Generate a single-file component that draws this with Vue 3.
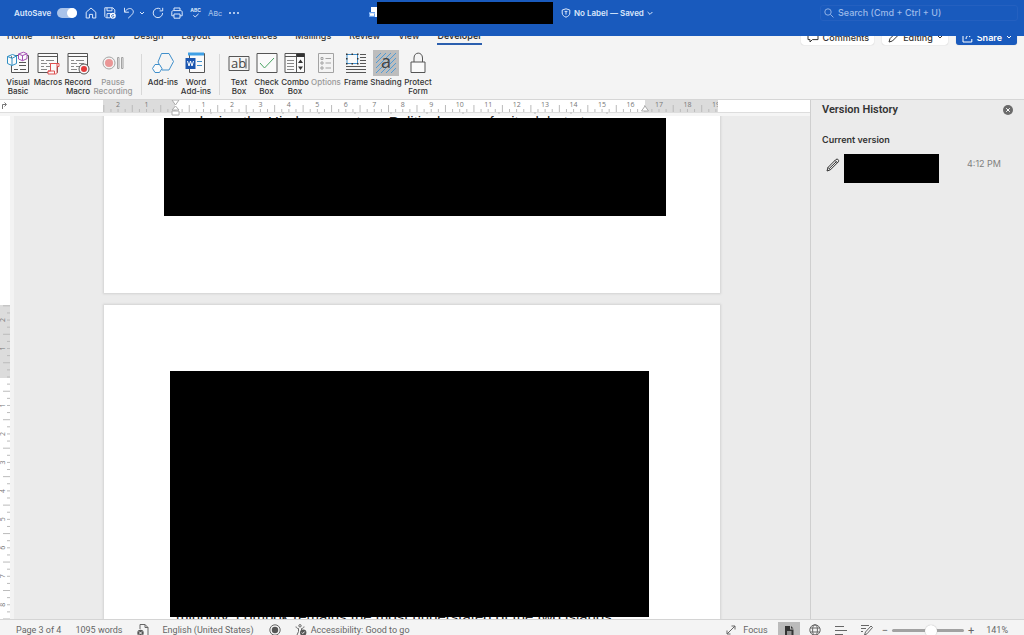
<script setup>
import { ref } from 'vue'

const autosave = ref(true)
const query = ref('')
const zoom = ref(55)

const tabs = ['Home', 'Insert', 'Draw', 'Design', 'Layout', 'References', 'Mailings', 'Review', 'View', 'Developer']

const groups = [
  {
    name: 'code',
    items: [
      { icon: 'vb', label: 'Visual\nBasic' },
      { icon: 'macros', label: 'Macros' },
      { icon: 'record', label: 'Record\nMacro' },
      { icon: 'pause', label: 'Pause\nRecording', off: true },
    ],
  },
  {
    name: 'addins',
    items: [
      { icon: 'addins', label: 'Add-ins' },
      { icon: 'word', label: 'Word\nAdd-ins' },
    ],
  },
  {
    name: 'controls',
    items: [
      { icon: 'text', label: 'Text\nBox' },
      { icon: 'check', label: 'Check\nBox' },
      { icon: 'combo', label: 'Combo\nBox' },
      { icon: 'options', label: 'Options', off: true },
      { icon: 'frame', label: 'Frame' },
      { icon: 'shading', label: 'Shading', on: true },
      { icon: 'lock', label: 'Protect\nForm' },
    ],
  },
]

const UNIT = 28.47
function marks(zero, from, to) {
  const list = []
  for (let q = from; q <= to; q++) {
    list.push({ at: zero + (q * UNIT) / 4, long: Math.abs(q % 4) === 2, n: q % 4 === 0 && q !== 0 ? Math.abs(q / 4) : '' })
  }
  return list
}
const hMarks = marks(72, -10, 76)
const vMarks = marks(261, -10, 34)
const textMarks = Array.from({ length: 12 }, (_, i) => 108 + i * 36)
</script>

<template>
  <div class="app">
    <header class="titlebar">
      <div class="quick">
        <label class="autosave">AutoSave<input v-model="autosave" type="checkbox" role="switch" /></label>
        <button aria-label="Home"><svg width="12" height="12" viewBox="0 0 12 12"><path d="M1.2 5.2 6 1l4.8 4.2V11H7.6V7.4H4.4V11H1.2z" /></svg></button>
        <button aria-label="Save"><svg width="12" height="12" viewBox="0 0 12 12"><path d="M6 10.8H2.2L.8 9.4V.8h8l2 2V6M3 .8v3h5v-3M3 10.8V6.6h4" /><circle cx="8.8" cy="8.8" r="3" class="solid" /><path class="blue" d="M7.5 8.8a1.4 1.4 0 0 1 2.5-.6M10.1 9a1.4 1.4 0 0 1-2.5.6" /></svg></button>
        <button aria-label="Undo"><svg width="12" height="12" viewBox="0 0 12 12"><path d="M1.5.8v4.4h4.4M1.600 5C4 1.600 7.200.6 9.200 2.400c2.300 2.300.6 4.600-1 6L5.200 11.200" /></svg></button>
        <button aria-label="Undo options" class="tiny"><svg width="6" height="12" viewBox="0 0 6 12"><path d="m1 5 2 2 2-2" /></svg></button>
        <button aria-label="Redo"><svg width="12" height="12" viewBox="0 0 12 12"><path d="M10.600 6A4.700 4.700 0 1 1 8.600 2.100M10.700.8v3.100H7.600" /></svg></button>
        <button aria-label="Print"><svg width="12" height="12" viewBox="0 0 12 12"><path d="M3 3.600V1h6v2.600M3 8.800H.8V5.200c0-1 .6-1.600 1.600-1.600h7.200c1 0 1.600.6 1.600 1.600v3.600H9M3 7h6v4.200H3z" /></svg></button>
        <button aria-label="Spelling" class="spell"><span>ABC</span><svg width="8" height="5" viewBox="0 0 8 5"><path d="m1.400 2.200 1.800 1.800L6.600.8" /></svg></button>
        <button class="abc" aria-label="Case">Aʙᴄ</button>
        <button aria-label="More" class="more"><i></i><i></i><i></i></button>
      </div>
      <div class="doctitle">
        <svg width="8" height="11" viewBox="0 0 8 11"><path class="page" d="M2 0h6v10H2z" /><path class="badge" d="M0 5h6v5H0z" /><path class="w" d="m1 6 1 3 1-3 1 3 1-3" /></svg>
        <div class="redacted title"></div>
        <button class="saved">
          <svg width="10" height="10" viewBox="0 0 10 10"><path d="M5 .8 8.800 2v3c0 2-1.600 3.400-3.800 4.200C2.800 8.400 1.200 7 1.200 5V2zM3.600 3.400h2.800M5 3.400v3.200" /></svg>
          No Label — Saved
          <svg width="6" height="6" viewBox="0 0 6 6"><path d="m.6 2 2.400 2.400L5.400 2" /></svg>
        </button>
      </div>
      <label class="search">
        <svg width="10" height="10" viewBox="0 0 10 10"><circle cx="4" cy="4" r="3.200" /><path d="m6.400 6.400 3 3" /></svg>
        <input v-model="query" type="search" placeholder="Search (Cmd + Ctrl + U)" aria-label="Search" />
      </label>
    </header>

    <nav class="tabs">
      <button v-for="t in tabs" :key="t" class="tab" :class="{ active: t === 'Developer' }">{{ t }}</button>
      <div class="actions">
        <button class="pill"><svg width="12" height="11" viewBox="0 0 12 11"><path d="M1 .6h10v7H5.400L3 10V7.600H1z" /></svg>Comments</button>
        <button class="pill"><svg width="11" height="11" viewBox="0 0 11 11"><path d="M1 10 2 6.600 7.600 1l2.400 2.400L4.400 9z" /></svg>Editing<svg width="6" height="6" viewBox="0 0 6 6"><path d="m1 2 2 2 2-2" /></svg></button>
        <button class="pill share"><svg width="11" height="11" viewBox="0 0 11 11"><path d="M4 1.600H1V10h8.800V7M4 7c0-3 2-4 5-4M7 1l2.400 2L7 5" /></svg>Share<svg width="6" height="6" viewBox="0 0 6 6"><path d="m1 2 2 2 2-2" /></svg></button>
      </div>
    </nav>

    <section class="ribbon">
      <div v-for="g in groups" :key="g.name" class="group" :class="g.name">
        <button v-for="i in g.items" :key="i.label" class="cmd" :class="{ off: i.off, on: i.on }">
          <svg width="26" height="26" viewBox="0 0 26 26">
            <g v-if="i.icon === 'vb'">
              <path class="k fill" d="M6.500 5.500h17v17h-17z" /><path class="k" d="M14 12.500h7M14 15.500h7M9 19.500h4M15 19.500h6" />
              <path class="purple fill" d="m13.500 4 5-1.800L22 3.700v5l-4.500 2-4-1.700zM13.500 4l4 1.600L22 3.700M17.500 5.600v5" />
              <path class="cyan fill" d="m2.500 6.500 5-2 4 1.500v7.500l-4.500 2-4.500-2zM2.500 6.500l4.500 1.800 4.500-2.300M7 8.300v7" />
            </g>
            <g v-if="i.icon === 'macros' || i.icon === 'record'">
              <path class="k fill" d="M3 3.500h19.500v19H3z" /><path class="k" d="M3 6.500h19.500" /><path class="thin" d="M6 10.500h3M11 10.500h8M6 13.500h6M14 13.500h5M6 16.500h3M11 16.500h5M6 19.500h6" />
              <path v-if="i.icon === 'macros'" class="red fill" d="M15.500 13.500H24v3h-2v6c0 1-.6 1.500-1.500 1.500H13v-3h2.500zM22 13.500v3M13 21h6.500v3" />
              <g v-else><circle cx="19" cy="19" r="5" class="k fill" /><circle cx="19" cy="19" r="3" class="redsolid" /></g>
            </g>
            <g v-if="i.icon === 'pause'">
              <circle cx="9" cy="13" r="6" class="k" /><circle cx="9" cy="13" r="4" class="redsolid" /><path class="k" d="M17.500 7.500h1.500v11h-1.500zM21.500 7.500H23v11h-1.500z" />
            </g>
            <g v-if="i.icon === 'addins'">
              <path class="sky" d="M11.500 3.500h7.500l4.500 8-4.500 8.500h-7L8 12z" /><path class="sky fill" d="M5 14.500h4.500l2.500 4-2.500 4H5l-2.500-4z" />
            </g>
            <g v-if="i.icon === 'word'">
              <path class="k fill" d="M6.500 3.500h15v19h-15z" /><path class="skysolid" d="M5 2.500h16v3H5z" /><path class="sky" d="M14 11.500h5M14 15.500h5" />
              <path class="navy" d="M2.500 8h10v11h-10z" /><path class="white" d="m4.500 11 1.500 5 1.500-5L9 16l1.500-5" />
            </g>
            <g v-if="i.icon === 'text'">
              <path class="k" d="M3 6.500h20v14H3zM20 8.500v10" /><text x="5" y="18" class="ab">ab</text>
            </g>
            <g v-if="i.icon === 'check'"><path class="k fill" d="M3 3.500h20v19H3z" /><path class="green" d="m6 13 4.500 5L20 8" /></g>
            <g v-if="i.icon === 'combo'">
              <path class="k fill" d="M3 3.500h19.500v19H3zM14.500 3.500v19M3 6.500h19.500" /><path class="ksolid" d="M14.500 3.500h8v3.500h-8zM16 13l2.500-3.500L21 13zM16 16.500 18.500 20l2.500-3.500z" /><path class="thin" d="M5 10.500h7M5 13.500h7M5 16.500h7M5 19.500h7" />
            </g>
            <g v-if="i.icon === 'options'"><path class="k" d="M5.500 3.500h15v19h-15zM8 7.500h2v2H8zM8 12h2v2H8zM8 17h2v2H8zM12.500 8.500H18M12.500 13H18M12.500 18H18" /></g>
            <g v-if="i.icon === 'frame'">
              <path class="k" d="M17 4.500h6M17 7.500h6M17 10.500h6M17 13.500h6M3 16.500h20M3 19.500h20M3 22.500h20" /><path class="sky fill" d="M4 4.500h10.500v9H4z" />
              <path class="ksolid" d="M3 3.500h1.500V5H3zM8.500 3.500H10V5H8.500zM14 3.500h1.500V5H14zM3 8h1.500v1.500H3zM14 8h1.500v1.500H14zM3 13h1.500v1.500H3zM8.500 13H10v1.500H8.500zM14 13h1.500v1.500H14z" />
            </g>
            <g v-if="i.icon === 'shading'">
              <path class="plate" d="M0 0h26v26H0z" />
              <path class="hatch" d="M3 8l5-5M3 13 13 3M3 18 18 3M3 23 23 3M8 23 23 8M13 23l10-10M18 23l5-5" /><text x="8" y="18" class="a">a</text>
            </g>
            <g v-if="i.icon === 'lock'"><path class="k" d="M9 12V8c0-6.500 8.500-6.500 8.500 0v4" /><path class="k fill" d="M6 12h14v10.500H6z" /></g>
          </svg>
          <span>{{ i.label }}</span>
        </button>
      </div>
    </section>

    <main class="work">
      <div class="editor">
        <div class="hruler">
          <svg class="corner" width="11" height="12" viewBox="0 0 11 12"><path d="M2.500 9V4.500H6M4.500 2.500l2 2-2 2" /></svg>
          <div class="hscale">
            <svg width="615" height="16" viewBox="0 0 615 16">
              <path class="zone" d="M0 0h72v12H0zM542 0h73v12h-73z" />
              <template v-for="m in hMarks" :key="m.at">
                <path class="tick" :d="`M${m.at} ${m.long ? 5 : 9}V12`" />
                <text v-if="m.n" :x="m.at" y="7">{{ m.n }}</text>
              </template>
              <path v-for="x in textMarks" :key="x" class="tick" :d="`M${x} 12v2`" />
              <path class="handle" d="M69 0h7l-3.500 5zM72.500 6l3.500 4h-7zM69 11h7v4h-7zM542 6l3.500 5h-7z" />
            </svg>
          </div>
        </div>
        <div class="canvasrow">
          <div class="vruler">
            <svg width="10" height="504" viewBox="0 0 10 504">
              <path class="zone" d="M0 189h10v73H0z" />
              <template v-for="m in vMarks" :key="m.at">
                <path class="tick" :d="`M${m.long ? 3 : 7} ${m.at}H10`" />
                <text v-if="m.n" x="0" y="0" :transform="`translate(5 ${m.at}) rotate(-90)`">{{ m.n }}</text>
              </template>
            </svg>
          </div>
          <div class="canvas">
            <article class="page first">
              <p class="cut above">replacing the Hindu monastery. Political power for its debut at</p>
              <div class="redacted"></div>
            </article>
            <article class="page second">
              <div class="redacted"></div>
              <p class="cut below">minority. Lombok remains the most understated of the two islands</p>
            </article>
          </div>
        </div>
      </div>
      <aside class="panel">
        <div class="panelhead">
          <h2>Version History</h2>
          <button aria-label="Close"><svg width="10" height="10" viewBox="0 0 10 10"><circle cx="5" cy="5" r="5" /><path d="m3.200 3.200 3.600 3.600m0-3.600L3.200 6.800" /></svg></button>
        </div>
        <h3>Current version</h3>
        <div class="version">
          <svg width="14" height="14" viewBox="0 0 14 14"><path d="M1 13 2 9.400 10 1.400c1.600-1 3.400.8 2.400 2.400l-8 8zM9 2.400l2.600 2.600M2 9.400l2.400 2.400M3.400 10.400 10.400 3.600" /></svg>
          <div class="redacted"></div>
          <time>4:12 PM</time>
        </div>
      </aside>
    </main>

    <footer class="status">
      <button class="pages">Page 3 of 4</button>
      <button class="words">1095 words</button>
      <button class="proof" aria-label="Proofing"><svg width="12" height="14" viewBox="0 0 12 14"><path d="M3 6V1.500h5L11 4.500V13H7M8 1.500v3h3" /><circle cx="3.500" cy="10" r="3.200" class="s" /><path class="l" d="m2 8.500 3 3m0-3-3 3" /></svg></button>
      <button class="lang">English (United States)</button>
      <button class="rec" aria-label="Record"><svg width="12" height="12" viewBox="0 0 12 12"><circle cx="6" cy="6" r="5.200" /><circle cx="6" cy="6" r="3.200" class="s" /></svg></button>
      <button class="access"><svg width="12" height="12" viewBox="0 0 12 12"><circle cx="5" cy="1.800" r="1.200" /><path d="M1 2.500c0 1.500 1.500 2 2.500 2v3L2 11M9 2.500c0 1.500-1.500 2-2.500 2V6" /><circle cx="8.200" cy="8.600" r="3.200" class="s" /><path class="l" d="m6.800 8.600 1 1 1.800-2" /></svg>Accessibility: Good to go</button>
      <div class="views">
        <button class="focus"><svg width="10" height="10" viewBox="0 0 10 10"><path d="M5.500 1H9v3.500M9 1 1 9M1 5.500V9h3.500" /></svg>Focus</button>
        <button class="view on" aria-label="Print layout"><svg width="10" height="12" viewBox="0 0 10 12"><path class="dark" d="M1 1h5v3.500h3.500V12H1zM7 1l2.500 2.500H7z" /><path class="l" d="M3 7h4.500M3 9h4.500" /></svg></button>
        <button class="view" aria-label="Web layout"><svg width="12" height="12" viewBox="0 0 12 12"><circle cx="6" cy="6" r="5.200" /><ellipse cx="6" cy="6" rx="2.400" ry="5.200" /><path d="M1.200 4h9.600M1.200 8h9.600" /></svg></button>
        <button class="view" aria-label="Outline"><svg width="12" height="12" viewBox="0 0 12 12"><path d="M0 2.500h9M0 6.500h12M0 10.500h8" /></svg></button>
        <button class="view" aria-label="Draft"><svg width="12" height="12" viewBox="0 0 12 12"><path d="M0 1.500h8M0 4.500h5M0 7.500h2M3.500 11l1-3L10 2l1.500 1.500L6 9.800z" /></svg></button>
        <button class="step">−</button>
        <input v-model="zoom" type="range" min="0" max="100" aria-label="Zoom" />
        <button class="step">+</button>
        <button class="percent">141%</button>
      </div>
    </footer>
  </div>
</template>

<style>
html,
body {
  margin: 0;
  overflow: hidden;
}
</style>

<style scoped>
.app {
  height: 100vh;
  display: flex;
  flex-direction: column;
  overflow: hidden;
  background: #f4f4f4;
  color: #333;
  font-family: Inter, "Liberation Sans", sans-serif;
  font-size: 8px;
}
button {
  border: 0;
  padding: 0;
  margin: 0;
  background: none;
  color: inherit;
  font: inherit;
  white-space: nowrap;
}
svg {
  display: block;
  flex: none;
  fill: none;
  stroke: currentColor;
}
.redacted {
  background: #000;
}

.titlebar {
  flex: none;
  height: 36px;
  padding: 0 6px 11px 14px;
  box-sizing: border-box;
  display: grid;
  grid-template-columns: 355px 1fr 198px;
  align-items: center;
  background: #195abd;
  color: #dce8fb;
}
.quick {
  display: flex;
  align-items: center;
  gap: 7px;
}
.autosave {
  display: flex;
  align-items: center;
  gap: 6px;
  font-weight: 600;
}
.autosave input {
  appearance: none;
  display: flex;
  justify-content: flex-end;
  width: 20px;
  height: 10px;
  margin: 0 1px 0 0;
  border-radius: 5px;
  background: #a9c3ea;
}
.autosave input::before {
  content: "";
  width: 10px;
  height: 10px;
  border-radius: 5px;
  background: #fff;
}
.quick .solid {
  fill: #fff;
  stroke: none;
}
.quick .blue {
  stroke: #195abd;
}
.quick .tiny {
  margin: 0 0 0 -3px;
}
.spell {
  display: flex;
  flex-direction: column;
  align-items: center;
  font-size: 5px;
  line-height: 5px;
  font-weight: 700;
}
.abc {
  color: #a9c3ea;
}
.more {
  display: flex;
  gap: 2px;
}
.more i {
  width: 2px;
  height: 2px;
  border-radius: 1px;
  background: #dce8fb;
}
.doctitle {
  display: flex;
  align-items: center;
}
.doctitle .page {
  fill: #fff;
  stroke: none;
}
.doctitle .badge {
  fill: #6ba2ee;
  stroke: none;
}
.doctitle .w {
  stroke: #fff;
}
.title {
  width: 176px;
  height: 22px;
}
.saved {
  display: flex;
  align-items: center;
  gap: 3px;
  margin-left: 8px;
  font-weight: 600;
}
.search {
  display: flex;
  align-items: center;
  gap: 4px;
  height: 16px;
  box-sizing: border-box;
  padding: 0 3px;
  border: 1px solid #2460c0;
  border-radius: 3px;
  color: #8fb1e6;
}
.search input {
  appearance: none;
  flex: 1;
  min-width: 0;
  padding: 0;
  border: 0;
  outline: 0;
  background: none;
  color: inherit;
  font: inherit;
  font-size: 9px;
  font-weight: 500;
}
.search input::placeholder {
  color: #9dbbea;
}

.tabs {
  flex: none;
  height: 11px;
  padding: 0 7px;
  display: flex;
  align-items: flex-end;
  gap: 18px;
  overflow: hidden;
}
.tab {
  margin-bottom: 2px;
  padding-bottom: 2px;
  border-bottom: 2px solid transparent;
  font-size: 9px;
  line-height: 10px;
  font-weight: 500;
}
.tab.active {
  font-weight: 600;
  border-color: #2b5fae;
}
.actions {
  display: flex;
  gap: 8px;
  margin-left: auto;
}
.pill {
  display: flex;
  align-items: center;
  gap: 4px;
  height: 16px;
  margin-bottom: 2px;
  padding: 0 5px 0 6px;
  border-radius: 3px;
  background: #fff;
  box-shadow: 0 0 1px #aaa;
  font-size: 9px;
  font-weight: 500;
}
.share {
  background: #195abd;
  color: #fff;
  font-weight: 600;
}

.ribbon {
  flex: none;
  height: 53px;
  box-sizing: border-box;
  padding: 3px 3px 0;
  display: flex;
  border-bottom: 1px solid #d6d6d6;
}
.group {
  display: grid;
  align-items: start;
}
.code {
  grid-template-columns: 30px 30px 30px 40px;
  padding-right: 8px;
}
.addins {
  grid-template-columns: 34px 32px;
  padding: 0 7px 0 5px;
}
.controls {
  grid-template-columns: 28px 27px 30px 32px 28px 32px 32px;
  padding-left: 6px;
}
.addins,
.controls {
  position: relative;
}
.addins::before,
.controls::before {
  content: "";
  position: absolute;
  left: 0;
  top: 4px;
  width: 1px;
  height: 41px;
  background: #d8d8d8;
}
.cmd {
  display: flex;
  flex-direction: column;
  align-items: center;
  gap: 2px;
  line-height: 9px;
  font-weight: 500;
}
.cmd span {
  white-space: pre;
  text-align: center;
}
.cmd.off {
  color: #999;
}
.cmd.off svg {
  opacity: 0.5;
}
.k {
  stroke: #555;
}
.thin {
  stroke: #888;
}
.fill {
  fill: #fafafa;
}
.ksolid {
  fill: #333;
  stroke: none;
}
.purple {
  stroke: #a64fb5;
}
.cyan {
  stroke: #2f8fc4;
}
.red {
  stroke: #e04f4f;
}
.redsolid {
  fill: #e23b3b;
  stroke: none;
}
.sky {
  stroke: #3f8fcb;
}
.skysolid {
  fill: #3fa0e6;
  stroke: none;
}
.navy {
  fill: #1a56b0;
  stroke: none;
}
.white {
  stroke: #fff;
}
.green {
  stroke: #4aa564;
}
.plate {
  fill: #bdbdbd;
  stroke: none;
}
.hatch {
  stroke: #4f9bd6;
}
.ab,
.a {
  fill: #444;
  stroke: none;
  font: 13px "Open Sans", sans-serif;
}
.a {
  font-size: 18px;
}

.work {
  flex: 1;
  min-height: 0;
  display: flex;
}
.editor {
  flex: 1;
  min-width: 0;
  display: flex;
  flex-direction: column;
}
.hruler {
  flex: none;
  height: 16px;
  display: flex;
  background: linear-gradient(#fff 12px, #ddd 12px, #ddd 13px, #f5f5f5 13px);
}
.corner {
  margin-right: 3px;
  stroke: #777;
}
.hscale {
  flex: 1;
  display: flex;
  justify-content: center;
  padding-right: 3px;
}
.hruler text,
.vruler text {
  fill: #777;
  stroke: none;
  font: 7px "Open Sans", sans-serif;
  text-anchor: middle;
}
.zone {
  fill: #dcdcdc;
  stroke: none;
}
.tick {
  stroke: #bbb;
}
.handle {
  fill: #fff;
  stroke: #aaa;
}
.canvasrow {
  flex: 1;
  min-height: 0;
  display: flex;
}
.vruler {
  flex: none;
  width: 10px;
  overflow: hidden;
  background: #fff;
  border-right: 4px solid #f3f3f3;
}
.canvas {
  flex: 1;
  min-width: 0;
  overflow: hidden;
  display: flex;
  flex-direction: column;
  align-items: center;
  gap: 12px;
  background: #ebebeb;
}
.page {
  flex: none;
  width: 616px;
  box-sizing: border-box;
  background: #fff;
  box-shadow: 0 0 2px 1px #d2d2d2;
}
.first {
  padding: 0 54px 77px 60px;
}
.first .redacted {
  height: 98px;
}
.second {
  padding: 66px 71px 0 66px;
}
.second .redacted {
  height: 246px;
}
.cut {
  margin: 0;
  overflow: hidden;
  white-space: nowrap;
  color: #222;
  font-family: "Liberation Sans", sans-serif;
  font-size: 15px;
}
.above {
  height: 2px;
  line-height: 11px;
  padding-left: 14px;
}
.below {
  height: 2px;
  line-height: 0;
  padding-left: 6px;
}

.panel {
  flex: none;
  width: 214px;
  box-sizing: border-box;
  padding: 3px 11px 0;
  border-left: 1px solid #cfcfcf;
  background: #ebebeb;
}
.panelhead {
  display: flex;
  align-items: center;
  justify-content: space-between;
}
h2,
h3 {
  margin: 0;
  font-size: 11px;
  line-height: 14px;
  font-weight: 600;
}
h2 {
  font-family: Roboto, sans-serif;
}
h3 {
  margin-top: 16px;
  font-size: 9px;
}
.panelhead svg {
  fill: #6b6b6b;
  stroke: none;
}
.panelhead path {
  stroke: #fff;
}
.version {
  display: flex;
  align-items: flex-start;
  margin-top: 7px;
}
.version svg {
  margin: 4px 4px 0;
}
.version .redacted {
  width: 95px;
  height: 29px;
}
.version time {
  margin: 4px 12px 0 auto;
  font-size: 9px;
  line-height: 12px;
  color: #808080;
}

.status {
  flex: none;
  height: 16px;
  box-sizing: border-box;
  padding: 0 16px;
  display: flex;
  align-items: flex-start;
  overflow: hidden;
  border-top: 1px solid #d4d4d4;
  color: #666;
  font-family: Roboto, sans-serif;
  font-size: 9px;
}
.status button {
  display: flex;
  align-items: center;
  height: 20px;
}
.pages,
.words,
.proof {
  margin-right: 14px;
}
.lang {
  margin-right: 15px;
}
.rec {
  margin-right: 14px;
}
.access {
  gap: 4px;
}
.status .s {
  fill: #555;
  stroke: none;
}
.status .l {
  stroke: #f4f4f4;
}
.views {
  margin-left: auto;
  display: flex;
}
.focus {
  gap: 7px;
  margin-right: 10px;
}
.view {
  width: 22px;
  justify-content: center;
  margin-right: 4px;
}
.status .view.on {
  background: #bbb;
  margin-top: 2px;
  height: 17px;
}
.dark {
  fill: #333;
  stroke: none;
}
.views input {
  appearance: none;
  width: 72px;
  height: 3px;
  margin: 9px 4px 0;
  border-radius: 2px;
  background: #a2a2a2;
}
.views input::-webkit-slider-thumb {
  appearance: none;
  width: 12px;
  height: 12px;
  border-radius: 6px;
  background: #fff;
  box-shadow: 0 0 1px #999;
}
.step {
  font-size: 11px;
}
.percent {
  margin-left: 12px;
}
</style>
